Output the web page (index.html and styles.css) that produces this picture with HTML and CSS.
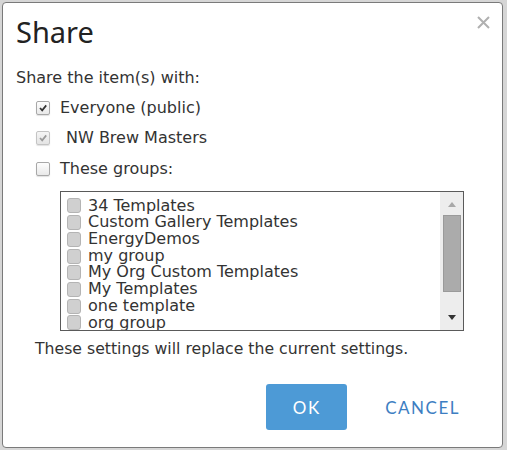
FILE: index.html
```html
<!DOCTYPE html>
<html>
<head>
<meta charset="utf-8">
<link rel="stylesheet" href="styles.css">
</head>
<body>
<div class="dialog">
  <div class="header">
    <h1 class="title">Share</h1>
    <button class="close" aria-label="Close">
      <svg width="13" height="13" viewBox="0 0 13 13"><path d="M1 1 L12 12 M12 1 L1 12" stroke="#b0b0b0" stroke-width="2" fill="none"/></svg>
    </button>
  </div>
  <div class="content">
    <p class="lead">Share the item(s) with:</p>
    <div class="options">
      <label class="option"><span class="cb checked"><svg width="10" height="10" viewBox="0 0 10 10"><path d="M2 5 L4.2 7.4 L8.2 2.4" stroke="#333" stroke-width="1.7" fill="none"/></svg></span><span>Everyone (public)</span></label>
      <label class="option"><span class="cb disabled"><svg width="10" height="10" viewBox="0 0 10 10"><path d="M2 5 L4.2 7.4 L8.2 2.4" stroke="#9a9a9a" stroke-width="1.7" fill="none"/></svg></span><span class="indent">NW Brew Masters</span></label>
      <label class="option"><span class="cb"></span><span>These groups:</span></label>
    </div>
    <div class="groups">
      <ul class="group-list">
        <li><span class="gcb"></span>34 Templates</li>
        <li><span class="gcb"></span>Custom Gallery Templates</li>
        <li><span class="gcb"></span>EnergyDemos</li>
        <li><span class="gcb"></span>my group</li>
        <li><span class="gcb"></span>My Org Custom Templates</li>
        <li><span class="gcb"></span>My Templates</li>
        <li><span class="gcb"></span>one template</li>
        <li><span class="gcb"></span>org group</li>
      </ul>
      <div class="scrollbar">
        <span class="arrow up"></span>
        <span class="thumb"></span>
        <span class="arrow down"></span>
      </div>
    </div>
    <p class="note">These settings will replace the current settings.</p>
  </div>
  <div class="footer">
    <button class="btn ok">OK</button>
    <button class="btn cancel">CANCEL</button>
  </div>
</div>
</body>
</html>
```

FILE: styles.css
```css
html, body {
  margin: 0;
  padding: 0;
}
body {
  background: #d6d6d6;
  padding: 2px;
  width: 507px;
  height: 450px;
  box-sizing: border-box;
  overflow: hidden;
}
.dialog {
  width: 501px;
  height: 446px;
  box-sizing: border-box;
  background: #fff;
  border: 1px solid #7a7a7a;
  border-radius: 4px;
  display: flex;
  flex-direction: column;
  font-family: "DejaVu Sans", Verdana, sans-serif;
  color: #333;
}
.header {
  display: flex;
  justify-content: space-between;
  align-items: flex-start;
  padding: 12px 12px 0 13px;
}
.title {
  margin: 0;
  font-family: "Noto Sans", "Open Sans", sans-serif;
  font-weight: 400;
  font-size: 29px;
  line-height: 34px;
  color: #222;
}
.close {
  border: 0;
  background: none;
  padding: 0;
  margin-top: 1px;
  width: 13px;
  height: 13px;
  display: flex;
}
.content {
  padding: 0 0 0 13px;
  display: flex;
  flex-direction: column;
}
.lead {
  margin: 19.5px 0 0;
  font-size: 16px;
  line-height: 18px;
}
.options {
  display: flex;
  flex-direction: column;
  gap: 12.5px;
  margin-top: 12px;
  padding-left: 20px;
}
.option {
  display: flex;
  align-items: center;
  font-size: 16px;
  line-height: 18px;
  gap: 10px;
}
.indent {
  padding-left: 6px;
}
.cb {
  width: 14px;
  height: 14px;
  box-sizing: border-box;
  border: 1px solid #a8a8a8;
  border-radius: 2px;
  background: linear-gradient(#fdfdfd, #e9e9e9);
  box-shadow: 0 1px 1px rgba(0,0,0,0.12);
  display: flex;
  align-items: center;
  justify-content: center;
}
.cb.disabled {
  border-color: #c4c4c4;
  background: linear-gradient(#f5f5f5, #e4e4e4);
}
.groups {
  margin: 13.5px 0 0 44px;
  width: 404px;
  height: 140px;
  box-sizing: border-box;
  border: 1px solid #5a5a5a;
  display: flex;
  overflow: hidden;
}
.group-list {
  list-style: none;
  margin: 0;
  padding: 5.6px 0 0 6px;
  flex: 1;
  font-size: 16px;
  line-height: 16.7px;
  overflow: hidden;
}
.group-list li {
  display: flex;
  align-items: center;
  gap: 7px;
  white-space: nowrap;
}
.gcb {
  width: 14px;
  height: 15px;
  box-sizing: border-box;
  border: 1px solid #b4b4b4;
  border-radius: 3px;
  background: #d0d0d0;
  flex: none;
}
.scrollbar {
  width: 23px;
  background: #ededed;
  display: flex;
  flex-direction: column;
  align-items: center;
  padding: 10px 0 10px;
  box-sizing: border-box;
}
.arrow {
  width: 0;
  height: 0;
  border-left: 4px solid transparent;
  border-right: 4px solid transparent;
}
.arrow.up {
  border-bottom: 5px solid #a8a8a8;
}
.arrow.down {
  border-top: 5px solid #333;
  margin-top: auto;
}
.thumb {
  width: 18px;
  height: 77px;
  box-sizing: border-box;
  margin-top: 8px;
  background: #ababab;
  border: 1px solid #9a9a9a;
}
.note {
  margin: 9px 0 0 19px;
  font-size: 15.7px;
  line-height: 18px;
}
.footer {
  display: flex;
  justify-content: flex-end;
  align-items: center;
  gap: 20px;
  padding: 26px 24px 0 0;
}
.btn {
  font-family: "Lato", "Noto Sans", sans-serif;
  font-size: 17px;
  letter-spacing: 1.5px;
  border: 0;
  border-radius: 3px;
  height: 46px;
  cursor: pointer;
}
.ok {
  width: 81px;
  background: #4d9ad6;
  color: #fff;
}
.cancel {
  background: none;
  color: #3d7ec2;
  padding: 0 18px;
}
```
